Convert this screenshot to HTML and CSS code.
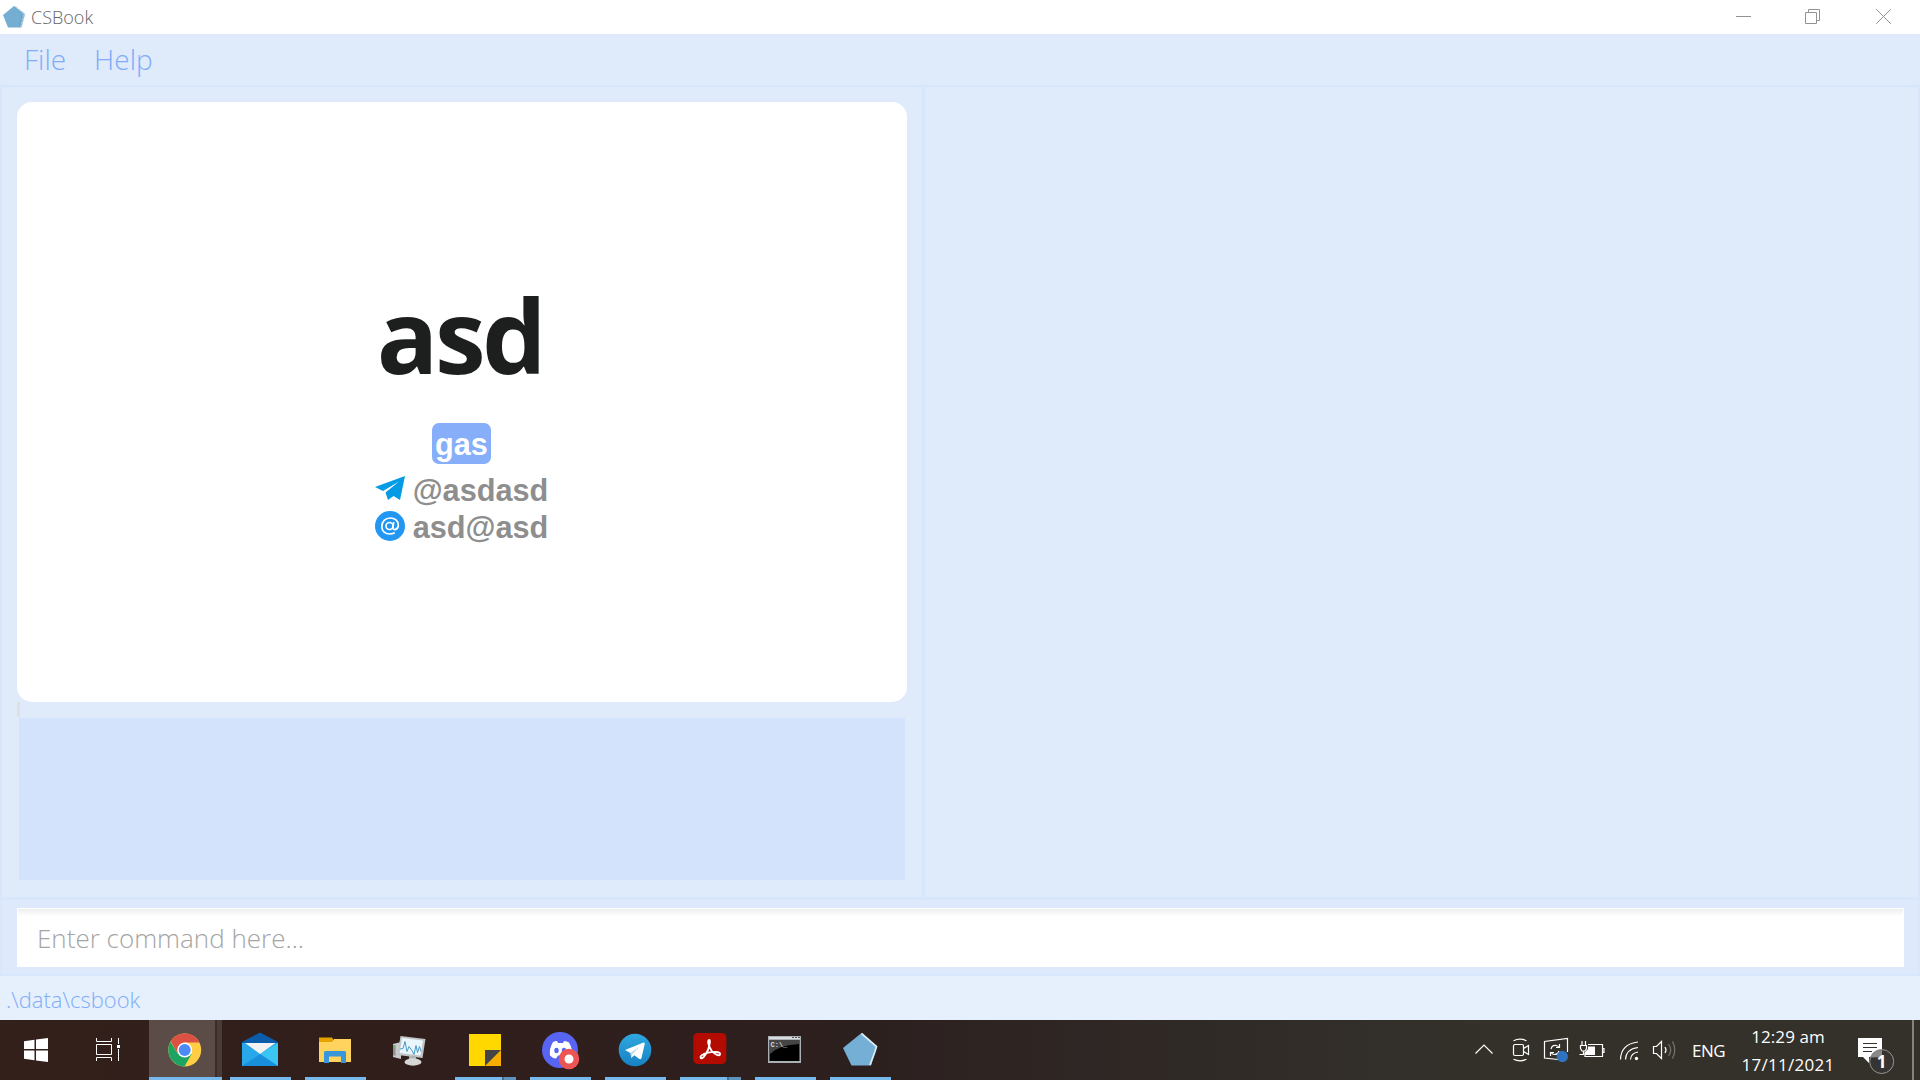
FILE: index.html
```html
<!DOCTYPE html>
<html lang="en">
<head>
<meta charset="utf-8">
<title>CSBook</title>
<link rel="stylesheet" href="styles.css">
</head>
<body>
<div class="screen">
  <header class="titlebar">
    <svg class="app-icon" width="24" height="24" viewBox="0 0 24 24"><path d="M12 1 23 9 19.500 22.500 6 22.500 1 10z" fill="#74afd3"/><path d="M13 1.500 22.500 9 19 22" fill="none" stroke="#b5d3e6" stroke-width="1.500" stroke-dasharray="3 1"/><path d="M12 2 20.500 9 17 22" fill="none" stroke="#68a3c7"/></svg>
    <span class="app-name">CSBook</span>
    <svg class="controls" width="180" height="34" viewBox="0 0 180 34" fill="none" stroke="#929292"><path d="M-4 16.500H11M65.500 12.500h11v11h-11zM68.500 12.500v-3h11v11h-3M136.200 9.200l14.600 14.600M150.800 9.200l-14.600 14.600"/></svg>
  </header>
  <nav class="menu"><span class="menu-item">File</span><span class="menu-item">Help</span></nav>
  <main class="workspace">
    <section class="left-pane">
      <article class="card">
        <h1 class="name">asd</h1>
        <span class="tag">gas</span>
        <div class="contact">
          <svg width="30" height="30" viewBox="0 0 30 30"><path d="M0 13 30 2 25 26 18.500 22 13 26 10.500 18.500 24 7.500 8 17z" fill="#039be5"/></svg>
          <span>@asdasd</span>
        </div>
        <div class="contact">
          <svg width="30" height="30" viewBox="0 0 30 30"><circle cx="15" cy="15" r="15" fill="#2196f3"/><g fill="none" stroke="#fff" stroke-width="1.700"><circle cx="14.500" cy="15" r="3.500"/><path d="M18.700 11l-.8 6c0 2.500 5.400 2.200 5.400-3 0-4.500-3.500-7-8-7-5 0-8.500 3.500-8.500 8.500 0 5 3.500 7.500 8 7.500 2 0 3.500-.4 5-1.200"/></g></svg>
          <span>asd@asd</span>
        </div>
      </article>
      <div class="caret"></div>
      <div class="results"></div>
    </section>
    <section class="right-pane"></section>
  </main>
  <section class="command"><div class="command-input">Enter command here...</div></section>
  <footer class="status">.\data\csbook</footer>
  <div class="taskbar">
    <div class="cell start"><svg width="74" height="60" viewBox="0 0 74 60"><path d="M24 21.200 34.500 19.700V29H24zM36 19.500 48 18V29H36zM24 30.500h10.500v9.800L24 38.800zM36 30.500h12V42L36 40.400z" fill="#fff"/></svg></div>
    <div class="cell view"><svg width="75" height="60" viewBox="0 0 75 60" fill="none" stroke="#fff"><path d="M22.500 18v3.500h15V18M22.500 41v-3.500h15V41M22.500 24.500h15v10h-15zM44.500 18v6M44.500 29v12"/><path d="M43 25h3v3h-3z" fill="#fff" stroke="none"/></svg></div>
    <div class="cell chrome"><svg width="73" height="57" viewBox="0 0 73 57"><circle cx="35.700" cy="30" r="16.500" fill="#ffce44"/><path d="M35.700 13.500a16.500 16.500 0 0 0-14 7.800L29 34l6.700-11.500h14.600a16.500 16.500 0 0 0-14.600-9z" fill="#dd5144"/><path d="M21.500 21.700A16.500 16.500 0 0 0 35.500 46.500L42.500 34 29 34z" fill="#1da462"/><circle cx="35.700" cy="30" r="7.500" fill="#fff"/><circle cx="35.700" cy="30" r="6" fill="#4c8bf5"/></svg></div>
    <div class="cell app open"><svg width="75" height="60" viewBox="0 0 75 60"><path d="M19 22 37 12.500 55 22v10H19z" fill="#0b5cab"/><path d="M19 23h36v23H19z" fill="#25a6e9"/><path d="M37 34 55 23v23z" fill="#3ac5f3"/><path d="m19 46 18-12 18 12z" fill="#178fdb"/><path d="M19 23v23l18-12z" fill="#28a8ea"/><path d="M22 23h30.500L37 34z" fill="#f2f2f2"/></svg></div>
    <div class="cell app open"><svg width="75" height="60" viewBox="0 0 75 60"><path d="M21 17.500h13l1.500 2.500v5H21z" fill="#e5a300"/><path d="M21 22h13l2-3h17v23H21z" fill="#ffd35e"/><path d="M26 43V32.500q0-1.500 1.500-1.500h19q1.500 0 1.500 1.500V43h-5v-6.500H31V43z" fill="#3a96db"/></svg></div>
    <div class="cell app"><svg width="75" height="60" viewBox="0 0 75 60"><path d="m20 24 8-2v17l-8-2z" fill="#c7cbcb"/><path d="M20 25h2.500v11L20 35z" fill="#8b9293"/><path d="M21 27h2v1h-2z" fill="#54df3c"/><path d="m27.500 16 25 3-3 19-25-3z" fill="#c1c5c6"/><path d="m29 18 21 2.500-2.500 15-21-2.500z" fill="#eaf6fb"/><path d="m27 29 3-.5 2-7 2 10 2-5 3 4 2 4 2-9 1.500 7 2-6 1.500 5" fill="none" stroke="#4b9ac4"/><path d="M36 36h7v4h-7z" fill="#aeb2b3"/><ellipse cx="40" cy="42" rx="8.500" ry="3.700" fill="#d5d7d7"/></svg></div>
    <div class="cell app open stacked"><svg width="75" height="60" viewBox="0 0 75 60"><path d="M21 14h32v32H21z" fill="#ffd800"/><path d="M37 46h16V30z" fill="#f8ae00"/><path d="M37 30h16L37 46z" fill="#444"/></svg></div>
    <div class="cell app open"><svg width="75" height="60" viewBox="0 0 75 60"><circle cx="37" cy="30" r="18" fill="#5865f2"/><path d="M30 22q2-1 4-1l1 2h5l1-2q3 0 5 1.500 4 7 3 13-3 2.500-6 3l-2-3h-6l-2 3q-4-.5-6-3-1-7 3-13.500z" fill="#fff"/><ellipse cx="33.500" cy="30.500" rx="2.200" ry="2.700" fill="#5865f2"/><ellipse cx="41" cy="30.500" rx="2.200" ry="2.700" fill="#5865f2"/><circle cx="46" cy="39" r="10.300" fill="#ed5555"/><circle cx="46" cy="39" r="4.500" fill="#fff"/></svg></div>
    <div class="cell app open"><svg width="75" height="60" viewBox="0 0 75 60"><defs><linearGradient id="tg" x2="0" y2="1"><stop stop-color="#2fa8e0"/><stop offset="1" stop-color="#1681c4"/></linearGradient></defs><circle cx="37" cy="30" r="16.300" fill="url(#tg)"/><path d="m27 30 18.500-7.500q1.500-.3 1.200 1.500L43.500 38q-.5 2-2.500.8l-4.700-3.600-3 2.800-.8-5z" fill="#fff"/><path d="m32.500 33 9.500-7-7.500 8-1.200 4z" fill="#b9d9ea"/></svg></div>
    <div class="cell app open stacked"><svg width="75" height="60" viewBox="0 0 75 60"><rect x="20.300" y="13" width="33" height="31" rx="4.500" fill="#b30b00"/><path d="M36.300 20c-2.500 0-.5 7 2.500 11 3 3.500 8 6 8.300 3 .3-2.500-7-2.500-12-1.300-4 1-8 3-7.500 5 1 2.500 5.500-3 7.500-8 1.300-4 2.500-9.500 1.200-9.700z" fill="none" stroke="#fff" stroke-width="1.900"/></svg></div>
    <div class="cell app open"><svg width="75" height="60" viewBox="0 0 75 60"><path d="M20 16h33v27H20z" fill="#aab0b3"/><path d="M21 17h31v2H21z" fill="#dadddf"/><path d="M44 17h2v1h-2zm3 0h2v1h-2zm3 0h2v1h-2z" fill="#555"/><path d="M21.500 20h30v21h-30z" fill="#000"/><path d="M22 20h29v4q-20 1-29 10z" fill="#454545"/><text x="22.500" y="26.500" class="prompt">C:\_</text></svg></div>
    <div class="cell app open"><svg width="75" height="60" viewBox="0 0 75 60"><path d="M38.500 13 54 26.500 48 45.500H28.500L20 28z" fill="#76afd5"/><path d="m38.500 13.500 15 13-1.500 5-5 13.500" fill="none" stroke="#d8edf5" stroke-width="1.700"/></svg></div>
    <div class="tray">
      <svg class="tray-icons" width="230" height="60" viewBox="0 0 230 60" fill="none" stroke="#fff" stroke-width="1.200">
        <path d="m15.500 33.500 8.500-8.500 8.500 8.500"/>
        <rect x="53.500" y="24.500" width="10" height="11" rx="1.500"/><path d="m63.500 28.500 5-3v9l-5-3M53.500 20.700q6.500-3 13 0M53.500 39.300q6.500 3 13 0"/>
        <path d="M98 39.500 84.500 38V21.500l23-3V32M91 29q1-4 5-3.500 2 .3 3 2M99.500 24v3.500H96M99 31q-1 3.500-4.500 3.500-2 0-3.500-2M90.500 36v-3.500H94"/><circle cx="102.300" cy="36.500" r="5.700" fill="#2f72bd" stroke="none"/>
        <path d="M128 24.500h14.500v12H125v-4M142.500 28.500h1.500v4h-1.500M120.500 25.500h6v3l-1.500 2.500h-3l-1.500-2.500zM122 21v4M125.500 21v4M123.500 31v3.500h-4"/><path d="M128 26.500h7v8.500h-10v-3l3-3z" fill="#fff" stroke="none"/>
        <path d="M160.500 39.500Q161 24 178 22M165.500 39.500Q166 29 178 27.500M170.500 39.500Q171 33 178 32"/><circle cx="176.500" cy="38.500" r="1.700" fill="#fff" stroke="none"/>
        <path d="M193.500 26.500h3l5-5v17l-5-5h-3zM205 27q2 3 0 6"/><path d="M208.500 24q4.500 6 0 12M212.500 21.500q4.500 8.500 0 17" stroke="#777570"/>
      </svg>
      <span class="lang">ENG</span>
      <div class="clock"><span>12:29 am</span><span class="date">17/11/2021</span></div>
      <svg class="notice" width="64" height="60" viewBox="0 0 64 60"><path d="M10 18h24v19h-13v6l-6-6h-5z" fill="#fff"/><path d="M15 23.500h14M15 27.500h14M15 31.500h9" stroke="#34312d"/><circle cx="33.700" cy="41.500" r="12" fill="#353432" stroke="#969492"/><path d="M22.500 37.500a12 12 0 0 1 11.500-7.500v7z" fill="#8a8987"/><text x="28.700" y="47.500" class="badge">1</text></svg>
    </div>
    <div class="peek"></div>
  </div>
</div>
</body>
</html>
```
FILE: styles.css
```css
* { box-sizing: border-box; }
body { margin: 0; background: #dfebfb; font-family: "Open Sans", "Noto Sans", sans-serif; }
svg { display: block; flex: none; }
.screen { width: 1920px; height: 1080px; display: flex; flex-direction: column; overflow: hidden; }
.titlebar { height: 34px; flex: none; background: #fff; display: flex; align-items: center; padding-left: 2px; }
.app-name { margin-left: 5px; font-size: 18px; font-weight: 300; color: #666; flex: 1; }
.controls { overflow: visible; }
.menu { height: 51px; flex: none; display: flex; gap: 28px; padding-left: 24px; color: #80acfa; font-size: 28px; font-weight: 300; line-height: 50px; }
.workspace { height: 815px; flex: none; display: flex; border: 2px solid #d8e6fc; border-bottom: 3px solid #d8e6fc; }
.left-pane { width: 923px; border-right: 3px solid #d9e7fc; padding: 15px; }
.right-pane { flex: 1; }
.card { width: 890px; height: 600px; background: #fff; border-radius: 15px; display: flex; flex-direction: column; align-items: center; padding-top: 163px; }
.name { margin: 0 4px 0 0; font-size: 102px; line-height: 140px; font-weight: 700; color: #1c1f1e; letter-spacing: -3.500px; }
.tag { margin: 18px 1px 0 0; width: 59px; height: 41px; border-radius: 7px; background: #86aef9; color: #fff; font: 700 30.700px/43px "Liberation Sans", Arial, sans-serif; text-align: center; }
.contact { height: 37px; margin-right: 1px; display: flex; align-items: flex-start; gap: 8px; color: #8e8e8e; font: 700 30.700px/37px "Liberation Sans", Arial, sans-serif; }
.contact svg { margin-top: 2px; }
.tag + .contact { margin-top: 8px; }
.caret { width: 3px; height: 15px; background: #e0e0e0; }
.results { height: 162px; margin: 1px 2px 0 1.500px; background: #d3e3fc; }
.command { height: 76px; flex: none; border: 2px solid #d9e7fc; border-top: 0; padding: 8px 14px 7px 15px; background: #deeafc; }
.command-input { height: 59px; border: 1px solid #fff; background: linear-gradient(#eee, #fff 7px); padding-left: 19px; color: #a5a5a5; font-size: 26px; line-height: 58px; font-weight: 300; }
.status { height: 44px; flex: none; background: #e6f0fd; color: #80acf8; padding-left: 6px; font-size: 22px; line-height: 46px; font-weight: 300; }
.taskbar { height: 60px; flex: none; display: flex; background: linear-gradient(90deg, #33201b, #301e1c 25%, #2c201f 45%, #302a27 62%, #34312b 78%, #34312b); color: #fff; }
.start { width: 74px; }
.view { width: 75px; }
.cell { flex: none; height: 60px; }
.chrome { width: 73px; margin-right: 1px; border-bottom: 3px solid #76b9ed; background: linear-gradient(90deg, #5c4c48 66px, #3c2c29 66px 68px, #4b3b38 68px); }
.app { width: 75px; }
.app.open { background: linear-gradient(#76b9ed, #76b9ed) 7px 57px / 61px 3px no-repeat; }
.app.stacked { background: linear-gradient(90deg, #76b9ed 47px, #486c8b 47px 49px, #5e93bd 49px) 7px 57px / 61px 3px no-repeat; }
.prompt { font: 700 7px "Liberation Mono", monospace; fill: #ddd; }
.tray { margin-left: auto; display: flex; }
.lang { width: 52px; font-size: 17px; line-height: 61px; padding-left: 2px; letter-spacing: -.5px; }
.clock { width: 92px; font-size: 17px; line-height: 28px; padding-top: 3px; display: flex; flex-direction: column; align-items: center; letter-spacing: .1px; white-space: nowrap; }
.date { letter-spacing: .3px; }
.notice { margin-left: 14px; }
.badge { font: 700 17px "Open Sans", sans-serif; fill: #fff; }
.peek { width: 8px; border-left: 2px solid #85837e; }
```
